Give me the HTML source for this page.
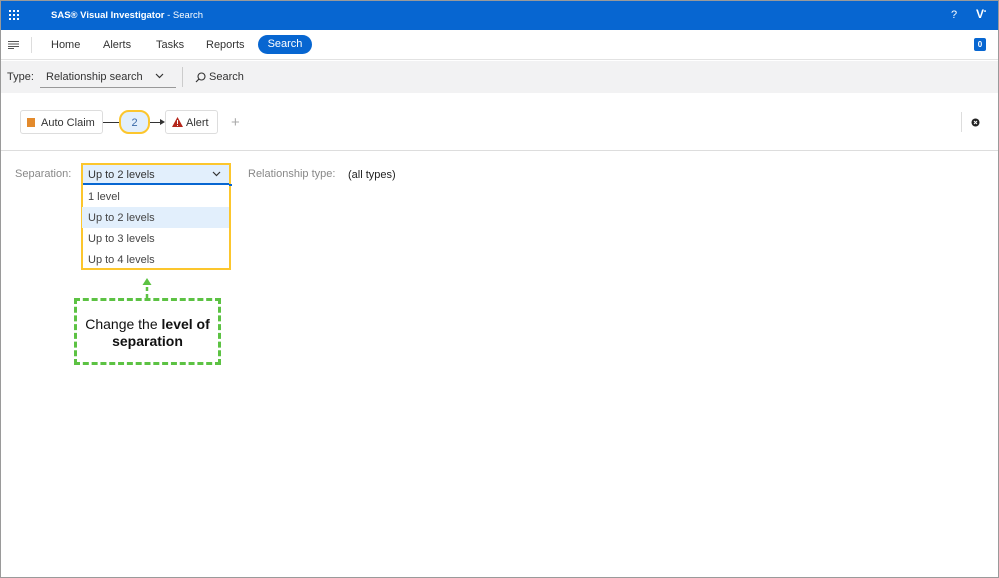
<!DOCTYPE html>
<html><head><style>
*{margin:0;padding:0;box-sizing:border-box}
body{width:999px;height:578px;overflow:hidden;font-family:"Liberation Sans",sans-serif;background:#fff;position:relative;font-size:11px;color:#333}
.frame{position:absolute;inset:0;border:1px solid #9a9a9a;pointer-events:none;z-index:10}
.top{position:absolute;left:0;top:0;width:999px;height:30px;background:#0766d1;color:#fff}
.nav{position:absolute;top:30px;left:0;width:999px;height:30px;background:#fff;border-bottom:1px solid #e2e2e2}
.nav span{position:absolute;top:9px;font-size:11px;color:#333}
.tb{position:absolute;top:61px;left:0;width:999px;height:32px;background:#f2f2f3}
.a{position:absolute}
.opt{position:absolute;left:1px;width:147px;height:21px;padding-left:6px;line-height:22px;color:#444}
</style></head><body>
<div class="top">
 <svg class="a" style="left:9px;top:10px" width="11" height="11"><g fill="#fff"><rect x="0" y="0" width="2" height="2"/><rect x="4" y="0" width="2" height="2"/><rect x="8" y="0" width="2" height="2"/><rect x="0" y="4" width="2" height="2"/><rect x="4" y="4" width="2" height="2"/><rect x="8" y="4" width="2" height="2"/><rect x="0" y="8" width="2" height="2"/><rect x="4" y="8" width="2" height="2"/><rect x="8" y="8" width="2" height="2"/></g></svg>
 <div class="a" style="left:51px;top:10px;font-size:9.5px"><b>SAS® Visual Investigator</b> - Search</div>
 <div class="a" style="left:951px;top:9px;font-size:11px">?</div>
 <div class="a" style="left:976px;top:7px;font-size:12px;font-weight:bold">V<sup style="font-size:6px">•</sup></div>
</div>
<div class="nav">
 <svg class="a" style="left:8px;top:11px" width="11" height="8"><g stroke="#555" stroke-width="1"><line x1="0" y1="0.5" x2="11" y2="0.5"/><line x1="0" y1="3" x2="11" y2="3"/><line x1="0" y1="5.5" x2="11" y2="5.5"/><line x1="0" y1="7.5" x2="6" y2="7.5"/></g></svg>
 <div class="a" style="left:31px;top:7px;width:1px;height:16px;background:#ddd"></div>
 <span style="left:51px">Home</span><span style="left:103px">Alerts</span><span style="left:156px">Tasks</span><span style="left:206px">Reports</span>
 <div class="a" style="left:258px;top:5px;width:54px;height:19px;border-radius:10px;background:#0766d1;color:#fff;text-align:center;line-height:19px">Search</div>
 <div class="a" style="left:974px;top:8px;width:12px;height:13px;background:#0766d1;color:#fff;font-size:8px;font-weight:bold;text-align:center;line-height:13px;border-radius:2px">0</div>
</div>
<div class="tb">
 <div class="a" style="left:7px;top:10px">Type:</div>
 <div class="a" style="left:40px;top:4px;width:136px;height:23px;border-bottom:1px solid #999;padding:6px 6px;color:#333">Relationship search</div>
 <svg class="a" style="left:155px;top:12px" width="9" height="6"><path d="M1 1L4.5 4.5L8 1" stroke="#333" fill="none" stroke-width="1.2"/></svg>
 <div class="a" style="left:182px;top:6px;width:1px;height:20px;background:#ccc"></div>
 <svg class="a" style="left:195px;top:11px" width="11" height="11"><circle cx="6.5" cy="4.5" r="3.5" stroke="#333" fill="none" stroke-width="1.1"/><line x1="4" y1="7" x2="1" y2="10" stroke="#333" stroke-width="1.2"/></svg>
 <div class="a" style="left:209px;top:10px">Search</div>
</div>
<div class="a" style="left:0;top:93px;width:999px;height:58px;border-bottom:1px solid #ddd"></div>
<div class="a" style="left:20px;top:110px;width:83px;height:24px;border:1px solid #ddd;border-radius:3px;padding:6px 0 0 20px">Auto Claim</div>
<div class="a" style="left:27px;top:118px;width:8px;height:9px;background:#e38a2c"></div>
<div class="a" style="left:103px;top:122px;width:16px;height:1px;background:#333"></div>
<div class="a" style="left:119px;top:110px;width:31px;height:24px;border:2px solid #fcc62d;border-radius:10px;background:#e2effc;text-align:center;line-height:22px;color:#3a6aa8">2</div>
<div class="a" style="left:150px;top:122px;width:12px;height:1px;background:#333"></div>
<div class="a" style="left:160px;top:119px;border-left:5px solid #333;border-top:3px solid transparent;border-bottom:3px solid transparent"></div>
<div class="a" style="left:165px;top:110px;width:53px;height:24px;border:1px solid #ddd;border-radius:3px;padding:6px 0 0 20px">Alert</div>
<svg class="a" style="left:172px;top:117px" width="11" height="10"><path d="M5.5 0L11 10H0Z" fill="#b5271c"/><rect x="5" y="3" width="1" height="4" fill="#fff"/><rect x="5" y="8" width="1" height="1" fill="#fff"/></svg>
<div class="a" style="left:231px;top:114px;font-size:15px;color:#aaa">+</div>
<div class="a" style="left:961px;top:112px;width:1px;height:20px;background:#ddd"></div>
<svg class="a" style="left:971px;top:118px" width="9" height="9"><circle cx="4.5" cy="4.5" r="4" fill="#222"/><path d="M3 3L6 6M6 3L3 6" stroke="#fff" stroke-width="1"/></svg>
<div class="a" style="left:15px;top:168px;color:#888">Separation:</div>
<div class="a" style="left:81px;top:163px;width:150px;height:107px;border:2px solid #fcc62d;background:#fff"></div>
<div class="a" style="left:83px;top:165px;width:146px;height:20px;background:#e2effc;border-bottom:2px solid #0766d1;padding:4px 5px;color:#333">Up to 2 levels</div>
<div class="a" style="left:229px;top:184px;width:3px;height:2px;background:#0766d1"></div>
<svg class="a" style="left:212px;top:171px" width="9" height="6"><path d="M1 1L4.5 4.5L8 1" stroke="#333" fill="none" stroke-width="1.2"/></svg>
<div class="opt" style="left:82px;top:186px">1 level</div>
<div class="opt" style="left:82px;top:207px;background:#e2effc">Up to 2 levels</div>
<div class="opt" style="left:82px;top:228px">Up to 3 levels</div>
<div class="opt" style="left:82px;top:249px">Up to 4 levels</div>
<div class="a" style="left:248px;top:168px;color:#888">Relationship type:</div>
<div class="a" style="left:348px;top:169px;color:#222">(all types)</div>
<svg class="a" style="left:140px;top:277px" width="14" height="22"><path d="M7 3V21" stroke="#5cc243" stroke-width="2.5" stroke-dasharray="4 3"/><path d="M2.5 8L7 1L11.5 8Z" fill="#5cc243"/></svg>
<div class="a" style="left:74px;top:298px;width:147px;height:67px;border:3px dashed #5cc243;text-align:center;font-size:14px;color:#111;padding-top:15px;line-height:17px">Change the <b>level of<br>separation</b></div>
<div class="frame"></div>
</body></html>
